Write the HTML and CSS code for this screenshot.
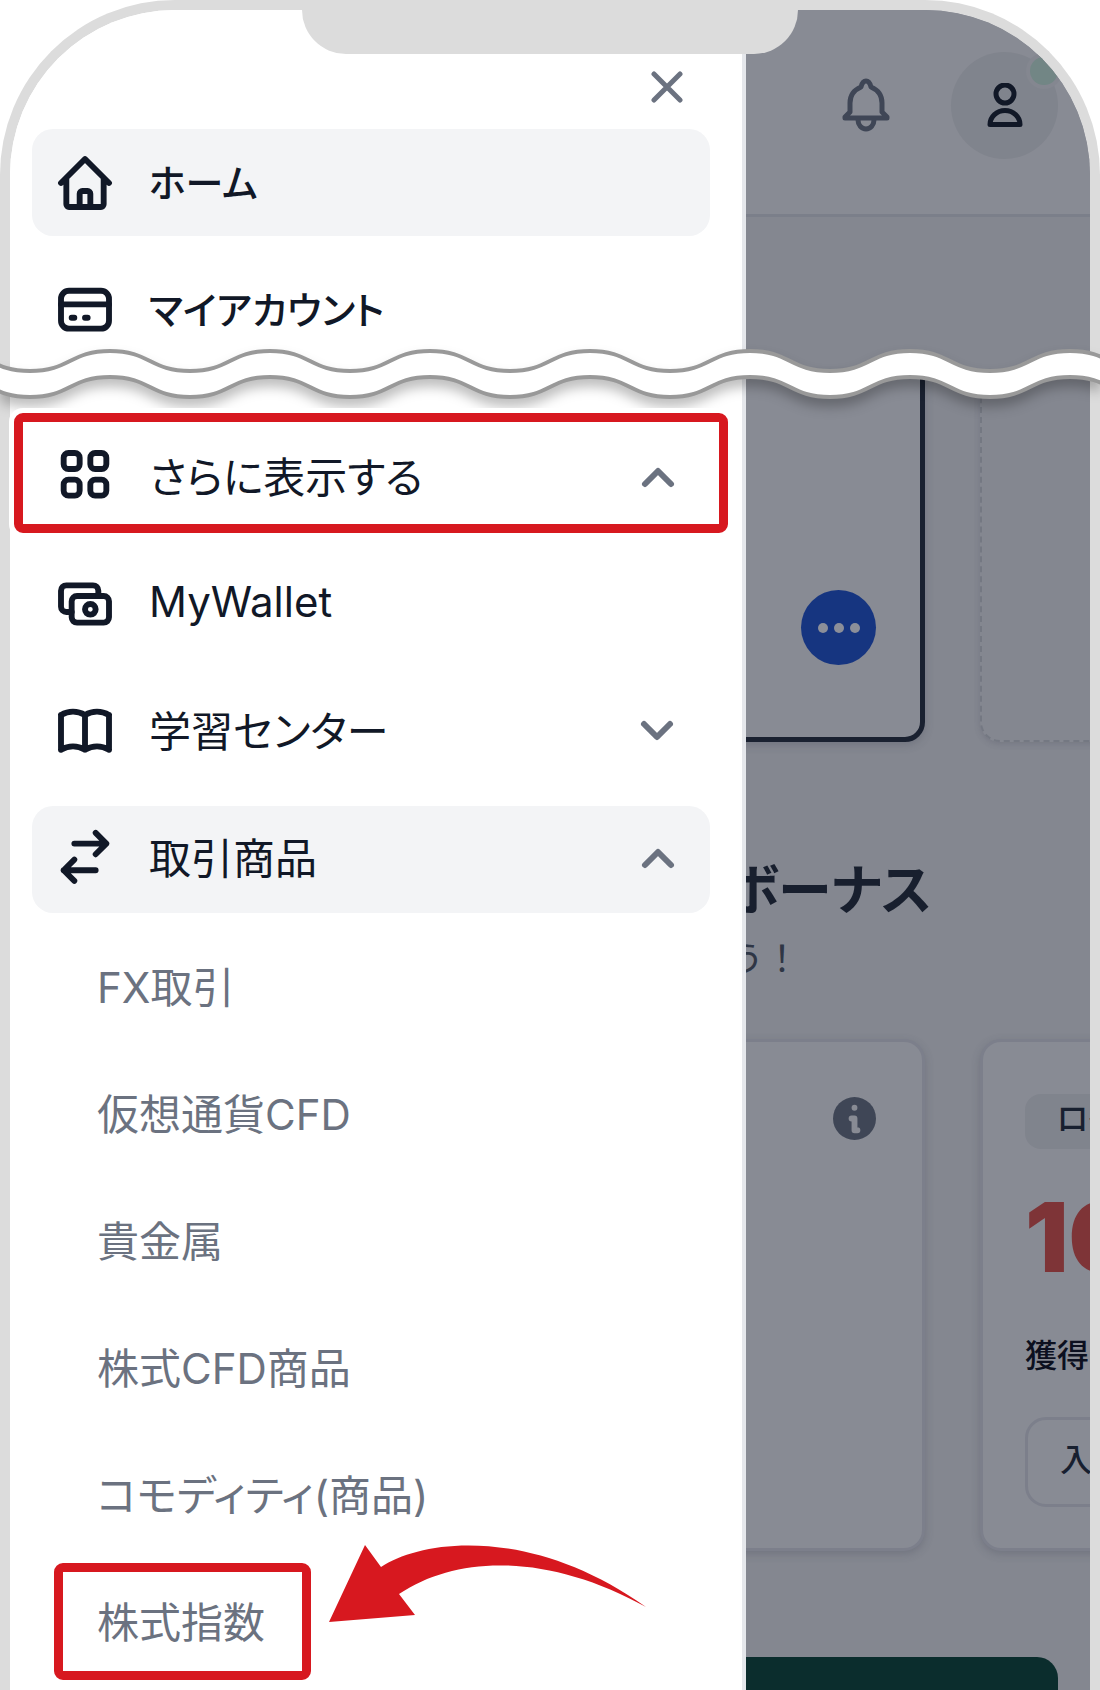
FILE: index.html
```html
<!DOCTYPE html>
<html lang="ja">
<head>
    <meta charset="UTF-8">
    <meta name="viewport" content="width=device-width, initial-scale=1.0">
    <title>メニュー</title>
    <link rel="stylesheet" href="styles.css">
</head>
<body>
    <div class="phone">
        <div class="notch"></div>

        <aside class="drawer">
            <div class="drawer-header">
                <button class="close-button" aria-label="閉じる">
                    <svg viewBox="0 0 32 32"><path d="M3 3l26 26M29 3L3 29"/></svg>
                </button>
            </div>

            <nav class="menu">
                <ul class="menu-list menu-top">
                    <li>
                        <a class="menu-item active" href="#">
                            <svg class="menu-icon" viewBox="0 0 24 24"><path d="M3 12l9-9 9 9M5 10.500V20a1 1 0 0 0 1 1h12a1 1 0 0 0 1-1v-9.500M10 21v-5a1 1 0 0 1 1-1h2a1 1 0 0 1 1 1v5"/></svg>
                            <span class="menu-text">ホーム</span>
                        </a>
                    </li>
                    <li>
                        <a class="menu-item" href="#">
                            <svg class="menu-icon" viewBox="0 0 24 24"><rect x="3" y="4.800" width="18" height="14.200" rx="3"/><path d="M3 9.900h18M7 14.900h1M12 14.900h1"/></svg>
                            <span class="menu-text">マイアカウント</span>
                        </a>
                    </li>
                </ul>

                <ul class="menu-list menu-more">
                    <li>
                        <button class="menu-item marked" aria-expanded="true">
                            <svg class="menu-icon" viewBox="0 0 24 24"><rect x="4" y="3" width="6" height="6" rx="1.800"/><rect x="14" y="3" width="6" height="6" rx="1.800"/><rect x="4" y="13" width="6" height="6" rx="1.800"/><rect x="14" y="13" width="6" height="6" rx="1.800"/></svg>
                            <span class="menu-text">さらに表示する</span>
                            <svg class="chevron" viewBox="0 0 40 40"><path d="M7 27l13-13 13 13"/></svg>
                        </button>
                    </li>
                    <li>
                        <a class="menu-item" href="#">
                            <svg class="menu-icon" viewBox="0 0 24 24"><rect x="7" y="9" width="14" height="10" rx="2"/><circle cx="14" cy="14" r="2"/><path d="M7 15H5a2 2 0 0 1-2-2V7a2 2 0 0 1 2-2h10a2 2 0 0 1 2 2v2"/></svg>
                            <span class="menu-text">MyWallet</span>
                        </a>
                    </li>
                    <li>
                        <button class="menu-item" aria-expanded="false">
                            <svg class="menu-icon" viewBox="0 0 24 24"><path d="M3 19a9 9 0 0 1 9 0 9 9 0 0 1 9 0M3 6a9 9 0 0 1 9 0 9 9 0 0 1 9 0M3 6v13M12 6v13M21 6v13"/></svg>
                            <span class="menu-text">学習センター</span>
                            <svg class="chevron" viewBox="0 0 40 40"><path d="M6 13l13 13 13-13"/></svg>
                        </button>
                    </li>
                    <li>
                        <button class="menu-item active" aria-expanded="true">
                            <svg class="menu-icon" viewBox="0 0 24 24"><path d="M8 6.600h12M16 2.600l4 4-4 4M16 16.600H4M8 12.600l-4 4 4 4"/></svg>
                            <span class="menu-text">取引商品</span>
                            <svg class="chevron" viewBox="0 0 40 40"><path d="M7 27l13-13 13 13"/></svg>
                        </button>
                        <ul class="menu-list submenu">
                            <li><a class="submenu-item" href="#">FX取引</a></li>
                            <li><a class="submenu-item" href="#">仮想通貨CFD</a></li>
                            <li><a class="submenu-item" href="#">貴金属</a></li>
                            <li><a class="submenu-item" href="#">株式CFD商品</a></li>
                            <li><a class="submenu-item" href="#">コモディティ(商品)</a></li>
                            <li class="pointed">
                                <a class="submenu-item marked" href="#">株式指数</a>
                                <svg class="arrow" viewBox="0 0 320 78"><path d="M0 77L36 0l16 22C95-7 205-18 317 62 223 10 131 8 70 49l16 21z"/></svg>
                            </li>
                        </ul>
                    </li>
                </ul>
            </nav>
        </aside>

        <main class="page">
            <header class="page-header">
                <button class="bell-button" aria-label="通知">
                    <svg viewBox="0 0 48 54"><path d="M24 3c-3 0-4 2-5 6C12 12 8 17 8 25v9l-5 5v1h42v-1l-5-5v-9c0-8-4-13-11-16-1-4-2-6-5-6zM16 42a8 9 0 0 0 16 0"/></svg>
                </button>
                <button class="user-button" aria-label="プロフィール">
                    <svg viewBox="0 0 36 44"><circle cx="18" cy="11" r="9"/><path d="M3 41.500a15 14 0 0 1 30 0z"/></svg>
                    <span class="status"></span>
                </button>
            </header>

            <div class="card-row accounts">
                <div class="account-card">
                    <button class="more-button" aria-label="その他"><span></span><span></span><span></span></button>
                </div>
                <div class="empty-card"></div>
            </div>

            <section class="bonus">
                <h2>ボーナス</h2>
                <p>う！</p>
            </section>

            <div class="card-row offers">
                <div class="offer-card">
                    <button class="info-button" aria-label="詳細">
                        <svg viewBox="0 0 44 44"><circle cx="22" cy="22" r="22"/><circle class="info-mark" cx="22" cy="11" r="3"/><path class="info-line" d="M19 22h3v12h3"/></svg>
                    </button>
                </div>
                <div class="offer-card">
                    <span class="tag">ロイ</span>
                    <strong class="amount">10</strong>
                    <p class="offer-text">獲得可</p>
                    <button class="deposit-button">入金</button>
                </div>
            </div>

            <div class="banner"></div>
        </main>

        <svg class="wave" viewBox="0 0 1100 80" aria-hidden="true">
            <path class="wave-fill" d="M-50 10C-10 10-10 30 30 30S70 10 110 10 150 30 190 30 230 10 270 10 310 30 350 30 390 10 430 10 470 30 510 30 550 10 590 10 630 30 670 30 710 10 750 10 790 30 830 30 870 10 910 10 950 30 990 30 1030 10 1070 10 1110 30 1150 30V56C1110 56 1110 36 1070 36S1030 56 990 56 950 36 910 36 870 56 830 56 790 36 750 36 710 56 670 56 630 36 590 36 550 56 510 56 470 36 430 36 390 56 350 56 310 36 270 36 230 56 190 56 150 36 110 36 70 56 30 56-10 36-50 36z"/>
        </svg>
    </div>
</body>
</html>
```

FILE: styles.css
```css
* {
    box-sizing: border-box;
}
body {
    margin: 0;
    background: white;
    color: #111827;
    font-family: Inter, "Noto Sans CJK JP", sans-serif;
    font-size: 42px;
    font-feature-settings: "palt";
}
button {
    padding: 0;
    border: none;
    background: none;
    color: inherit;
    font: inherit;
    font-feature-settings: inherit;
    cursor: pointer;
}
a {
    color: inherit;
    text-decoration: none;
}
svg {
    display: block;
    fill: none;
    stroke: currentColor;
    stroke-linecap: round;
    stroke-linejoin: round;
}
.phone {
    position: relative;
    display: grid;
    grid-template-columns: 15fr 7fr;
    height: 100vh;
    border: 10px solid #dcdcdc;
    border-bottom: none;
    border-radius: 175px 175px 0 0;
}
.notch {
    position: absolute;
    top: -10px;
    left: 27%;
    right: 27%;
    height: 54px;
    background: #dcdcdc;
    border-radius: 0 0 44px 44px;
    z-index: 1;
}

/* drawer */
.drawer {
    min-height: 0;
    background: white;
    border-right: 4px solid #e5e7eb;
    border-radius: 165px 0 0 0;
}
.drawer-header {
    display: flex;
    justify-content: flex-end;
    padding: 61px 59px 26px 0;
}
.close-button {
    width: 32px;
    color: #6b7280;
    stroke-width: 5;
}
.menu {
    padding: 0 32px 0 22px;
}
.menu-list {
    display: flex;
    flex-direction: column;
    gap: 20px;
    margin: 0;
    padding: 0;
    list-style: none;
}
.menu-top {
    margin-bottom: 62px;
    font-size: 38px;
    font-weight: 500;
}
.menu-more {
    font-weight: 380;
}
.menu-item {
    position: relative;
    display: flex;
    align-items: center;
    width: 100%;
    height: 107px;
    padding: 0 32px 0 21px;
    border-radius: 21px;
    text-align: left;
}
.menu-more .menu-item {
    padding-bottom: 4px;
}
.menu-item.active {
    background: #f3f4f6;
}
.menu-icon {
    width: 64px;
    height: 64px;
    margin-right: 32px;
    stroke-width: 2.2;
}
.menu-text {
    flex: 1;
    padding-bottom: 4px;
}
.chevron {
    width: 40px;
    color: #6b7280;
    stroke-width: 6;
}
.submenu {
    margin-top: 20px;
    color: #6b7280;
}
.submenu-item {
    position: relative;
    display: inline-flex;
    align-items: center;
    height: 107px;
    padding: 0 46px 4px 65px;
}
.submenu li {
    display: flex;
}

/* red markers */
.marked::after {
    content: "";
    position: absolute;
    inset: -12px -18px -1px;
    border: 9px solid #d7181f;
    border-radius: 9px;
    box-shadow: 0 0 0 5px white;
    z-index: 3;
}
.submenu-item.marked::after {
    inset: -5px 0 -5px 22px;
}
.pointed {
    position: relative;
}
.arrow {
    position: absolute;
    top: -23px;
    left: 297px;
    width: 320px;
    fill: #d7181f;
    stroke: none;
}

/* dimmed page */
.page {
    display: flex;
    flex-direction: column;
    min-width: 0;
    overflow: hidden;
    background: #848790;
    border-radius: 0 165px 0 0;
}
.page-header {
    display: flex;
    flex: none;
    justify-content: flex-end;
    align-items: center;
    gap: 61px;
    height: 207px;
    padding: 0 32px 14px 0;
    background: #888b94;
    border-bottom: 3px solid #7b7f8a;
}
.bell-button {
    width: 48px;
    color: #3f4656;
    stroke-width: 5;
}
.user-button {
    position: relative;
    display: flex;
    justify-content: center;
    align-items: center;
    width: 107px;
    height: 107px;
    border-radius: 50%;
    background: #80848d;
    stroke-width: 5;
}
.user-button svg {
    width: 36px;
}
.status {
    position: absolute;
    top: 1px;
    right: -4px;
    width: 36px;
    height: 36px;
    border: 4px solid #848790;
    border-radius: 50%;
    background: #728685;
}
.card-row {
    display: grid;
    flex: none;
    grid-template-columns: 1fr 150px;
    gap: 55px;
    margin: 0 -40px;
}
.accounts {
    height: 370px;
    margin-top: 155px;
}
.account-card {
    display: flex;
    justify-content: flex-end;
    align-items: flex-end;
    padding: 0 44px 72px 0;
    background: #888b94;
    border: 5px solid #1a2130;
    border-radius: 0 0 20px 20px;
    box-shadow: 0 3px 8px rgba(60, 62, 80, 0.25);
}
.more-button {
    display: flex;
    justify-content: center;
    align-items: center;
    gap: 6px;
    width: 75px;
    height: 75px;
    border-radius: 50%;
    background: #163580;
}
.more-button span {
    width: 10px;
    height: 10px;
    border-radius: 50%;
    background: #8c8f99;
}
.empty-card {
    border: 2px dashed #747882;
    border-radius: 0 0 20px 20px;
    box-shadow: 0 2px 6px rgba(60, 62, 80, 0.2);
}
.bonus {
    display: flex;
    flex-direction: column;
    align-items: flex-end;
    flex: none;
    height: 297px;
    padding-top: 109px;
    color: #181f2e;
    white-space: nowrap;
}
.bonus h2 {
    margin: 0 158px 0 0;
    font-size: 54px;
    font-weight: 600;
    line-height: 80px;
}
.bonus p {
    margin: 0 290px 0 0;
    color: #2f3645;
    font-size: 36px;
    font-weight: 380;
    font-feature-settings: normal;
    line-height: 56px;
}
.offers {
    height: 512px;
}
.offer-card {
    padding: 52px 42px 40px;
    background: #888b94;
    border: 3px solid #7c7f8b;
    border-radius: 21px;
    box-shadow: 0 3px 8px rgba(60, 62, 80, 0.25);
    white-space: nowrap;
}
.info-button {
    display: block;
    width: 43px;
    margin: 3px 4px 0 auto;
}
.info-button svg {
    fill: #3f4656;
    stroke: none;
}
.info-button .info-mark {
    fill: #888b94;
}
.info-button .info-line {
    fill: none;
    stroke: #888b94;
    stroke-width: 6;
}
.tag {
    display: inline-block;
    height: 55px;
    padding: 0 32px;
    border-radius: 16px;
    background: #80848d;
    color: #182030;
    font-size: 32px;
    font-weight: 500;
    line-height: 50px;
    vertical-align: top;
}
.amount {
    display: block;
    margin-top: 30px;
    color: #7e3437;
    font-size: 96px;
    font-weight: 900;
    line-height: 116px;
}
.offer-text {
    margin: 38px 0;
    color: #0c1020;
    font-size: 32px;
    font-weight: 500;
    line-height: 46px;
}
.deposit-button {
    height: 90px;
    padding: 0 32px 10px;
    border: 3px solid #7c7f8b;
    border-radius: 21px;
    color: #182030;
    font-size: 32px;
    font-weight: 500;
}
.banner {
    flex: 1;
    margin: 106px 32px 0 0;
    border-radius: 0 21px 0 0;
    background: #0b2d2d;
}

/* torn strip across the phone */
.wave {
    position: absolute;
    top: 331px;
    left: -10px;
    width: calc(100% + 20px);
    z-index: 2;
    filter: drop-shadow(0 8px 6px rgba(0, 0, 0, 0.25));
}
.wave-fill {
    fill: white;
    stroke: #999;
    stroke-width: 4;
}
```
